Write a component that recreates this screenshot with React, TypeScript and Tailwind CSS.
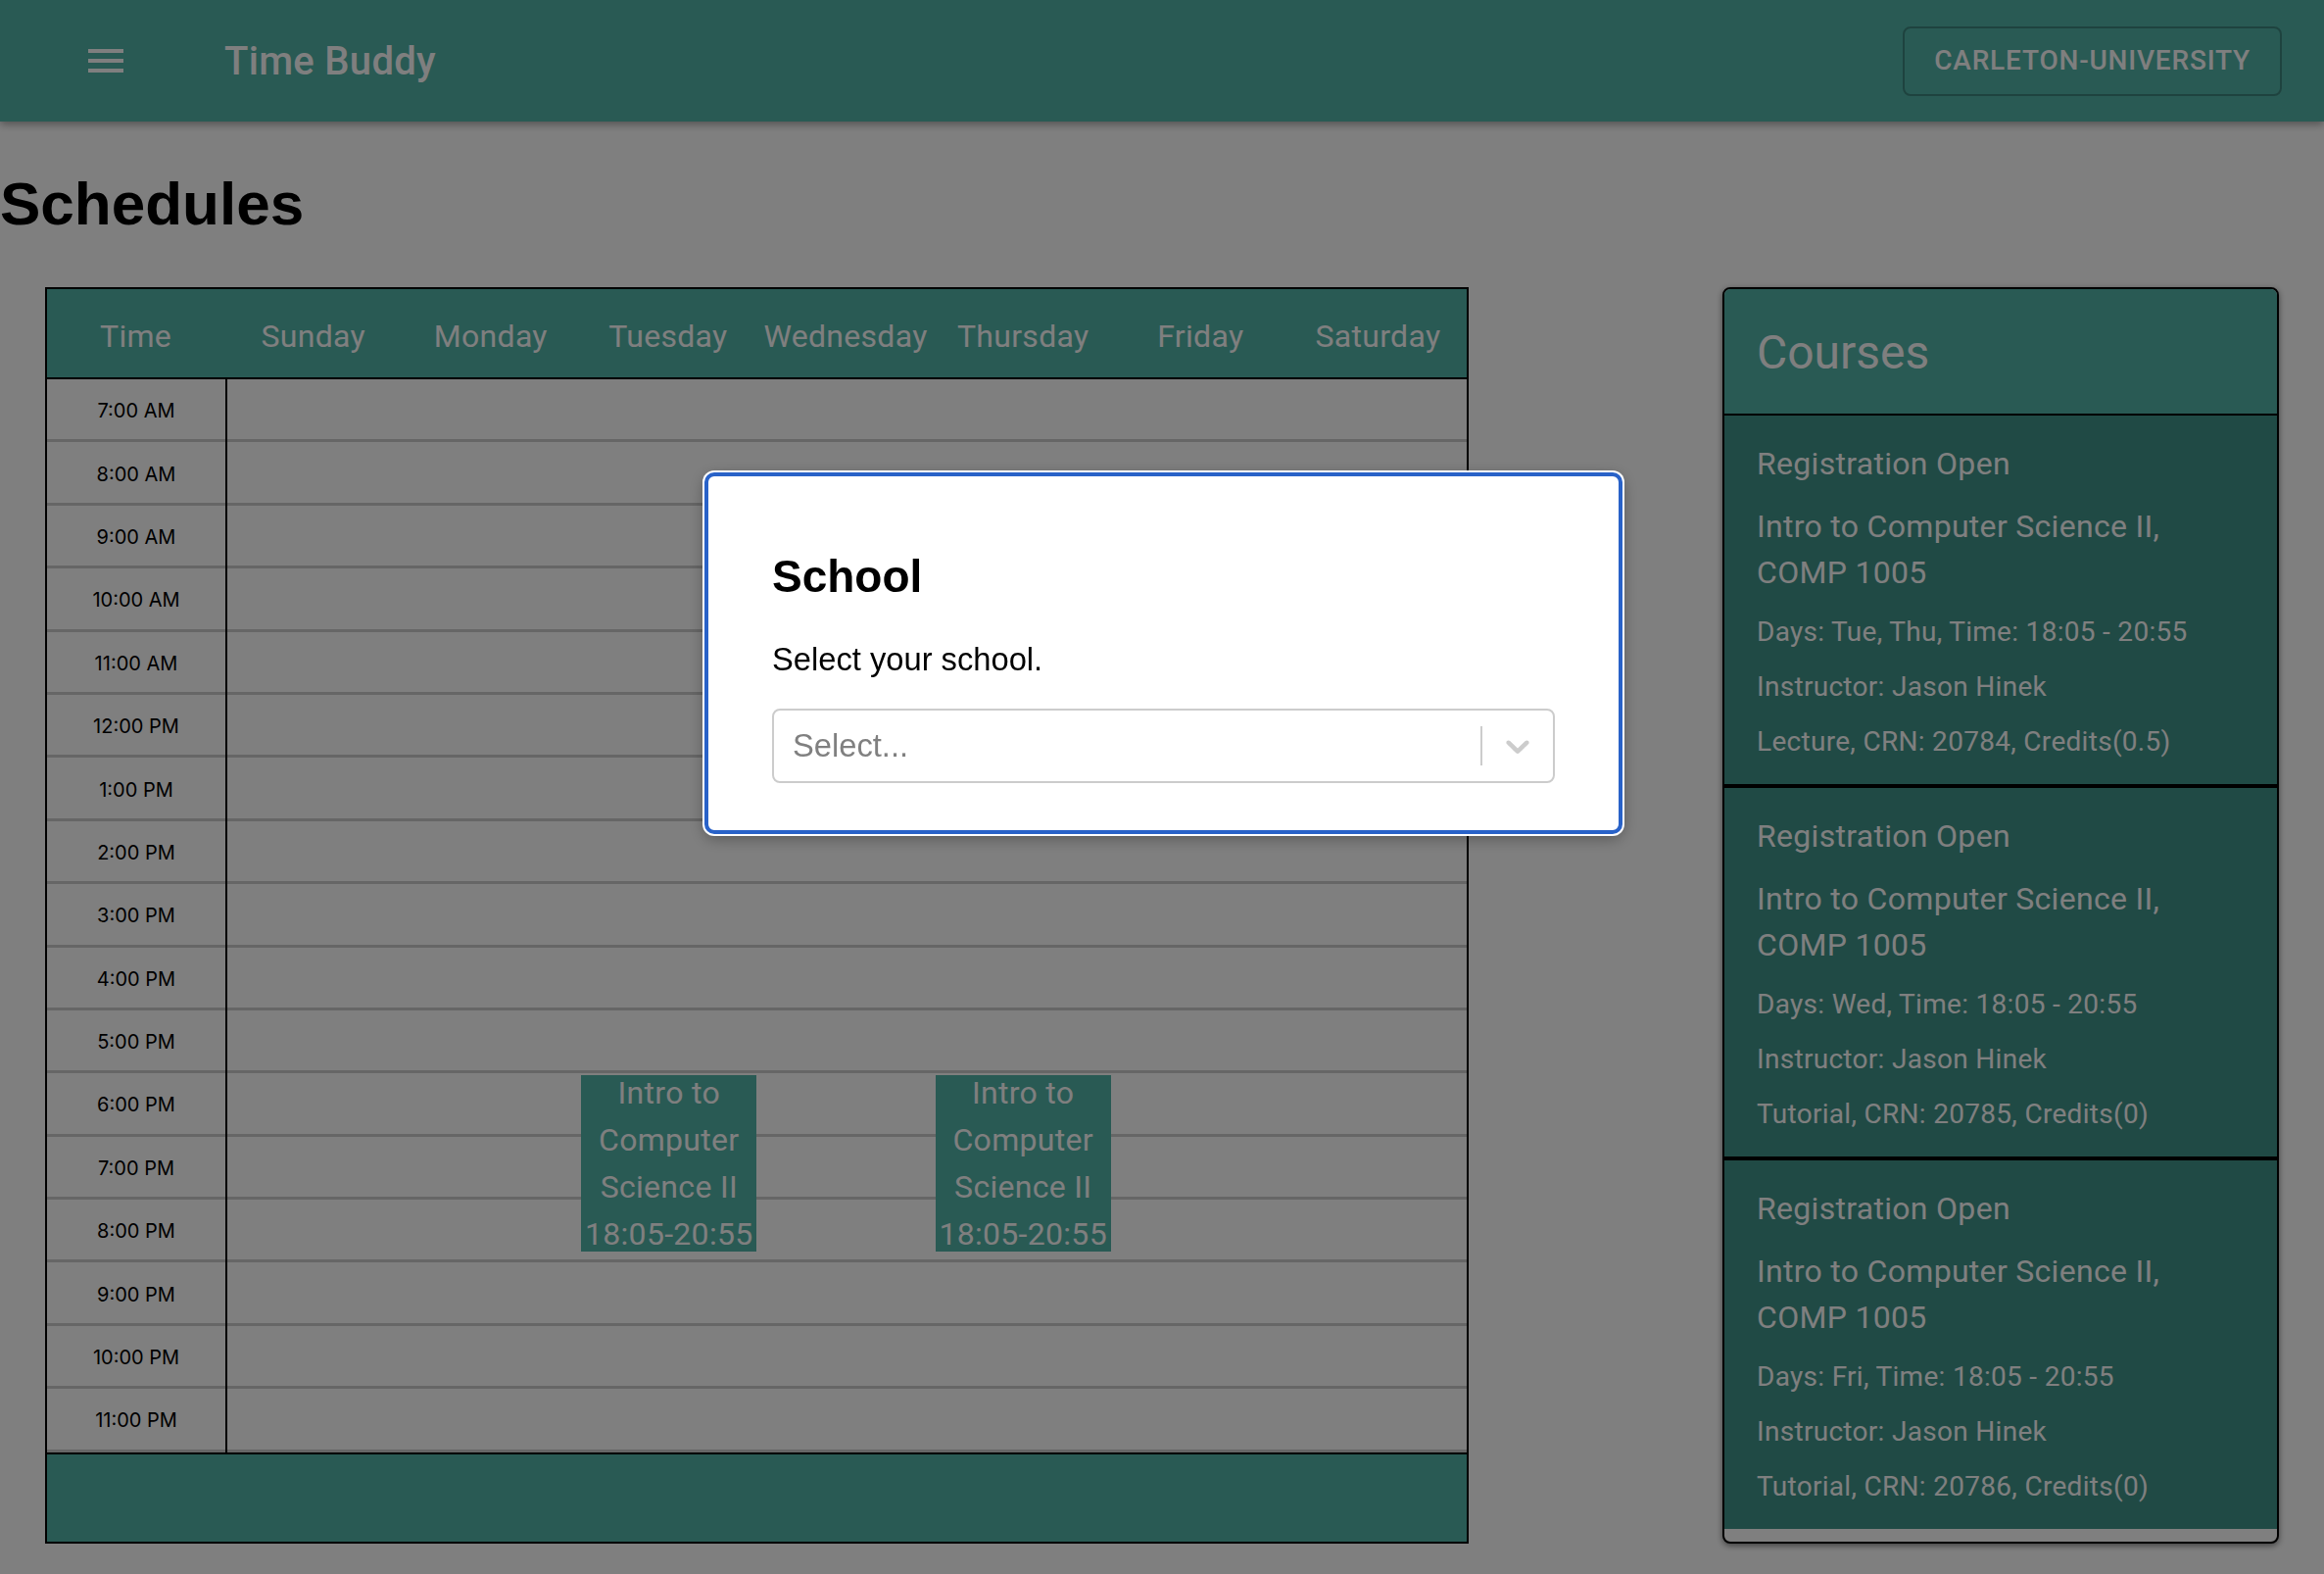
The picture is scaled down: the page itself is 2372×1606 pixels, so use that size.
import React from "react";

const HOURS = [
  "7:00 AM",
  "8:00 AM",
  "9:00 AM",
  "10:00 AM",
  "11:00 AM",
  "12:00 PM",
  "1:00 PM",
  "2:00 PM",
  "3:00 PM",
  "4:00 PM",
  "5:00 PM",
  "6:00 PM",
  "7:00 PM",
  "8:00 PM",
  "9:00 PM",
  "10:00 PM",
  "11:00 PM",
];

const DAYS = ["Sunday", "Monday", "Tuesday", "Wednesday", "Thursday", "Friday", "Saturday"];

const ROW_H = 64.4;

type Course = {
  status: string;
  title: string;
  days: string;
  instructor: string;
  detail: string;
};

const courses: Course[] = [
  {
    status: "Registration Open",
    title: "Intro to Computer Science II, COMP 1005",
    days: "Days: Tue, Thu, Time: 18:05 - 20:55",
    instructor: "Instructor: Jason Hinek",
    detail: "Lecture, CRN: 20784, Credits(0.5)",
  },
  {
    status: "Registration Open",
    title: "Intro to Computer Science II, COMP 1005",
    days: "Days: Wed, Time: 18:05 - 20:55",
    instructor: "Instructor: Jason Hinek",
    detail: "Tutorial, CRN: 20785, Credits(0)",
  },
  {
    status: "Registration Open",
    title: "Intro to Computer Science II, COMP 1005",
    days: "Days: Fri, Time: 18:05 - 20:55",
    instructor: "Instructor: Jason Hinek",
    detail: "Tutorial, CRN: 20786, Credits(0)",
  },
];

// blocks drawn on the week grid (day index from Sunday, row index from 7 AM)
const events = [
  { day: 2, row: 11, height: 180, lines: ["Intro to", "Computer", "Science II", "18:05-20:55"] },
  { day: 4, row: 11, height: 180, lines: ["Intro to", "Computer", "Science II", "18:05-20:55"] },
];

const roboto = "font-['Roboto',_'Liberation_Sans',_sans-serif]";

function TopBar() {
  return (
    <header className={`h-[124px] bg-[#52b4a8] flex items-center shadow-[0_3px_8px_rgba(0,0,0,0.35)] ${roboto}`}>
      <button className="ml-[90px] w-[36px] h-[24px] flex flex-col justify-between">
        <span className="block h-[4px] w-full bg-white" />
        <span className="block h-[4px] w-full bg-white" />
        <span className="block h-[4px] w-full bg-white" />
      </button>
      <div className="ml-[103px] pt-[2px] text-[40px] font-medium text-white tracking-[0.3px]">Time Buddy</div>
      <button className="ml-auto mr-[43px] h-[71px] px-[30px] rounded-[8px] border-2 border-black/25 text-white text-[28px] font-medium uppercase tracking-[0.8px]">
        carleton-university
      </button>
    </header>
  );
}

function ScheduleTable() {
  return (
    <div className="w-[1453px] border-2 border-black flex flex-col">
      <div className={`h-[92px] pt-[5px] grid grid-cols-8 items-center bg-[#52b4a8] border-b-2 border-black text-white text-[32px] tracking-[0.3px] ${roboto}`}>
        <div className="text-center">Time</div>
        {DAYS.map((d) => (
          <div key={d} className="text-center">
            {d}
          </div>
        ))}
      </div>

      <div className="flex">
        <div className="w-[184px] border-r-2 border-black font-['Inter',_sans-serif] text-[20px] text-black">
          {HOURS.map((h) => (
            <div
              key={h}
              className="flex items-center justify-center pt-[3px] border-b-[3px] border-[#cccccc]"
              style={{ height: ROW_H }}
            >
              {h}
            </div>
          ))}
        </div>

        <div className="relative flex-1">
          {HOURS.map((h) => (
            <div key={h} className="border-b-[3px] border-[#cccccc]" style={{ height: ROW_H }} />
          ))}

          {events.map((ev, i) => (
            <div
              key={i}
              className={`absolute bg-[#52b4a8] flex flex-col items-center justify-center text-white text-[32px] leading-[48px] tracking-[0.3px] text-center ${roboto}`}
              style={{
                top: ev.row * ROW_H + 2,
                height: ev.height,
                left: `${(ev.day * 100) / 7}%`,
                width: `calc(${100 / 7}% - 2px)`,
              }}
            >
              {ev.lines.map((l) => (
                <div key={l} className="whitespace-nowrap">
                  {l}
                </div>
              ))}
            </div>
          ))}
        </div>
      </div>

      <div className="h-[91px] bg-[#52b4a8] border-t-2 border-black" />
    </div>
  );
}

function CoursesPanel() {
  return (
    <aside
      className={`w-[568px] rounded-[8px] border-2 border-black bg-white overflow-hidden flex flex-col shadow-[0_2px_6px_rgba(0,0,0,0.5)] ${roboto}`}
    >
      <div className="h-[129px] shrink-0 bg-[#52b4a8] border-b-2 border-black flex items-center px-[33px] pt-[2px]">
        <h2 className="text-[48px] text-white">Courses</h2>
      </div>

      {courses.map((c, i) => (
        <div
          key={c.detail}
          className={`bg-[#40948a] px-[33px] pt-[25px] pb-[22px] text-white tracking-[0.3px] ${i < courses.length - 1 ? "border-b-4 border-black" : ""}`}
        >
          <div className="text-[32px] leading-[48px]">{c.status}</div>
          <div className="mt-[17px] text-[32px] leading-[47px]">{c.title}</div>
          <div className="mt-[16px] text-[28px] leading-[42px]">{c.days}</div>
          <div className="mt-[14px] text-[28px] leading-[42px]">{c.instructor}</div>
          <div className="mt-[14px] text-[28px] leading-[42px]">{c.detail}</div>
        </div>
      ))}
    </aside>
  );
}

function SchoolModal() {
  return (
    <div className="fixed inset-0 bg-black/50 flex justify-center">
      <div className="mt-[482px] ml-[3px] w-[937px] h-fit bg-white rounded-[10px] border-4 border-[#2962c8] ring-2 ring-white shadow-[0_4px_16px_rgba(0,0,0,0.35)] px-[65px] pt-[76px] pb-[48px] font-['Liberation_Sans',_Arial,_sans-serif]">
        <h2 className="text-[46px] leading-[52px] font-bold text-black">School</h2>
        <p className="mt-[40px] text-[32.7px] leading-[37px] text-black">Select your school.</p>
        <div className="mt-[32px] h-[76px] rounded-[8px] border-2 border-[#cccccc] bg-white flex items-center">
          <div className="flex-1 pl-[19px] text-[32.7px] text-[#808080]">Select...</div>
          <span className="w-[2px] h-[40px] bg-[#cccccc]" />
          <div className="w-[72px] flex items-center justify-center">
            <svg width="40" height="40" viewBox="0 0 20 20" fill="#cccccc" aria-hidden="true">
              <path d="M4.516 7.548c0.436-0.446 1.043-0.481 1.576 0l3.908 3.747 3.908-3.747c0.533-0.481 1.141-0.446 1.574 0 0.436 0.445 0.408 1.197 0 1.615-0.406 0.418-4.695 4.502-4.695 4.502-0.217 0.223-0.502 0.335-0.787 0.335s-0.57-0.112-0.789-0.335c0 0-4.287-4.084-4.695-4.502s-0.436-1.17 0-1.615z" />
            </svg>
          </div>
        </div>
      </div>
    </div>
  );
}

export default function App() {
  return (
    <div className="min-h-screen bg-white">
      <TopBar />
      <h1 className="mt-[48px] text-[62px] leading-[72px] font-bold text-black font-['Liberation_Sans',_Arial,_sans-serif]">
        Schedules
      </h1>
      <div className="mt-[49px] px-[46px] flex justify-between items-stretch">
        <ScheduleTable />
        <CoursesPanel />
      </div>
      <SchoolModal />
    </div>
  );
}
